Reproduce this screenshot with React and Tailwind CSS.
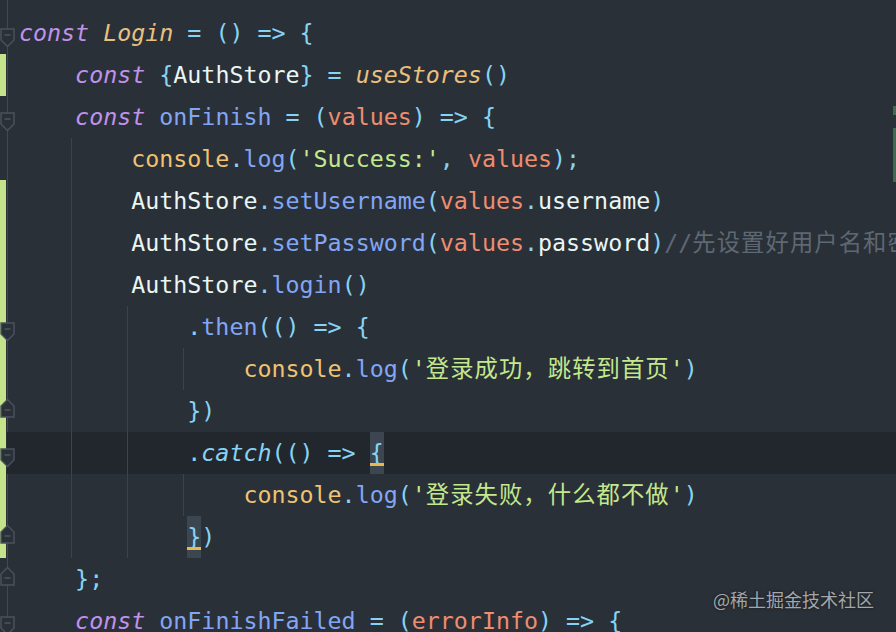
const C = {
  kw: 'text-[#c192e8] italic',
  fn: 'text-[#e9c07e] italic',
  pun: 'text-[#86d3f3]',
  id: 'text-[#eaf6f2]',
  blue: 'text-[#82a6f5]',
  par: 'text-[#ef8d6e]',
  con: 'text-[#f0c272]',
  str: 'text-[#c3e88d]',
  cjk: 'text-[#c3e88d] tracking-[1.1px]',
  com: 'text-[#5e6873]',
  comCjk: 'text-[#5e6873] tracking-[1.1px]',
  cat: 'text-[#86d3f3] italic',
};

// each line: tokens, gutter (green bar / fold marker), indent guides, current line
const lines = [
  { t: [['const', C.kw], [' '], ['Login', C.fn], [' = () => {', C.pun]], fold: 'open' },
  { t: [['    '], ['const', C.kw], [' '], ['{', C.pun], ['AuthStore', C.id], ['} = ', C.pun], ['useStores', C.fn], ['()', C.pun]], green: true },
  { t: [['    '], ['const', C.kw], [' '], ['onFinish', C.blue], [' = (', C.pun], ['values', C.par], [') => {', C.pun]], fold: 'open' },
  { t: [['        '], ['console', C.con], ['.', C.pun], ['log', C.blue], ['(', C.pun], ["'Success:'", C.str], [', ', C.pun], ['values', C.par], [');', C.pun]], g: [1] },
  { t: [['        '], ['AuthStore', C.id], ['.', C.pun], ['setUsername', C.blue], ['(', C.pun], ['values', C.par], ['.', C.pun], ['username', C.id], [')', C.pun]], g: [1], green: true },
  { t: [['        '], ['AuthStore', C.id], ['.', C.pun], ['setPassword', C.blue], ['(', C.pun], ['values', C.par], ['.', C.pun], ['password', C.id], [')', C.pun], ['//', C.com], ['先设置好用户名和密码', C.comCjk]], g: [1], green: true },
  { t: [['        '], ['AuthStore', C.id], ['.', C.pun], ['login', C.blue], ['()', C.pun]], g: [1], green: true },
  { t: [['            '], ['.', C.pun], ['then', C.blue], ['(() => {', C.pun]], g: [1, 2], green: true, fold: 'open' },
  { t: [['                '], ['console', C.con], ['.', C.pun], ['log', C.blue], ['(', C.pun], ["'", C.str], ['登录成功，跳转到首页', C.cjk], ["'", C.str], [')', C.pun]], g: [1, 2, 3], green: true },
  { t: [['            '], ['})', C.pun]], g: [1, 2], green: true, fold: 'close' },
  { t: [['            '], ['.', C.pun], ['catch', C.cat], ['(() => ', C.pun], ['{', C.pun, 'match']], g: [1, 2], green: true, fold: 'open', current: true },
  { t: [['                '], ['console', C.con], ['.', C.pun], ['log', C.blue], ['(', C.pun], ["'", C.str], ['登录失败，什么都不做', C.cjk], ["'", C.str], [')', C.pun]], g: [1, 2, 3], green: true },
  { t: [['            '], ['}', C.pun, 'match'], [')', C.pun]], g: [1, 2], green: true, fold: 'close' },
  { t: [['    '], ['};', C.pun]], fold: 'close' },
  { t: [['    '], ['const', C.kw], [' '], ['onFinishFailed', C.blue], [' = (', C.pun], ['errorInfo', C.par], [') => {', C.pun]], fold: 'open' },
];

const guideX = { 1: 'left-[52px]', 2: 'left-[108px]', 3: 'left-[164px]' };

function FoldMarker({ dir }) {
  if (dir === 'open') {
    return (
      <svg className="absolute left-0 top-[16px]" width="15" height="20" viewBox="0 0 15 20">
        <path d="M1 1 H14 V12 L7.5 18.5 L1 12 Z" fill="#2a3038" stroke="#4a535d" strokeWidth="1.4" />
        <path d="M4.5 7 H10.5" stroke="#4a535d" strokeWidth="1.6" />
      </svg>
    );
  }
  return (
    <svg className="absolute left-0 top-[8px]" width="15" height="20" viewBox="0 0 15 20">
      <path d="M1 19 H14 V8 L7.5 1.5 L1 8 Z" fill="#2a3038" stroke="#4a535d" strokeWidth="1.4" />
      <path d="M4.5 12 H10.5" stroke="#4a535d" strokeWidth="1.6" />
    </svg>
  );
}

function Token({ tok }) {
  const [text, cls, match] = tok;
  if (match) {
    return (
      <span className={`relative inline-block h-[42px] bg-[#3b4650] ${cls}`}>
        {text}
        <span className="absolute left-0 right-0 bottom-[8px] h-[3px] bg-[#e9b94c]" />
      </span>
    );
  }
  return <span className={cls || ''}>{text}</span>;
}

export default function App() {
  return (
    <div className="relative w-[896px] h-[632px] overflow-hidden bg-[#2a3038] pt-[12px] font-['DejaVu_Sans_Mono','Noto_Sans_CJK_SC',monospace] text-[23.3px]">
      {/* fold connector line */}
      <div className="absolute left-[7px] top-0 bottom-0 w-px bg-[#414a53]" />

      <div className="flex flex-col">
        {lines.map((ln, i) => (
          <div key={i} className="flex h-[42px] leading-[42px]">
            <div className="relative flex w-[19px] shrink-0">
              <div className={`w-[6px] shrink-0 ${ln.green ? 'bg-[#c5e38a]' : ''}`} />
              <div className={`flex-1 ${ln.current ? 'ml-[1px] bg-[#22272d]' : ''}`} />
              {ln.fold && <FoldMarker dir={ln.fold} />}
            </div>
            <div className={`relative flex-1 whitespace-pre text-[#eaf6f2] ${ln.current ? 'bg-[#22272d]' : ''}`}>
              {(ln.g || []).map((g) => (
                <span key={g} className={`absolute top-0 h-full w-px bg-[#3b434c] ${guideX[g]}`} />
              ))}
              {ln.t.map((tok, j) => (
                <Token key={j} tok={tok} />
              ))}
            </div>
          </div>
        ))}
      </div>

      {/* scrollbar change markers */}
      <div className="absolute right-0 top-[106px] w-[3px] h-[9px] bg-[#3f6c50]" />
      <div className="absolute right-0 top-[128px] w-[3px] h-[54px] bg-[#3f6c50]" />

      {/* watermark */}
      <div className="absolute right-[22px] bottom-[24px] text-[18px] leading-none text-[#a3a7ab] font-['Noto_Sans_CJK_SC',sans-serif] [text-shadow:0_0_3px_rgba(0,0,0,0.6)]">
        @稀土掘金技术社区
      </div>
    </div>
  );
}
